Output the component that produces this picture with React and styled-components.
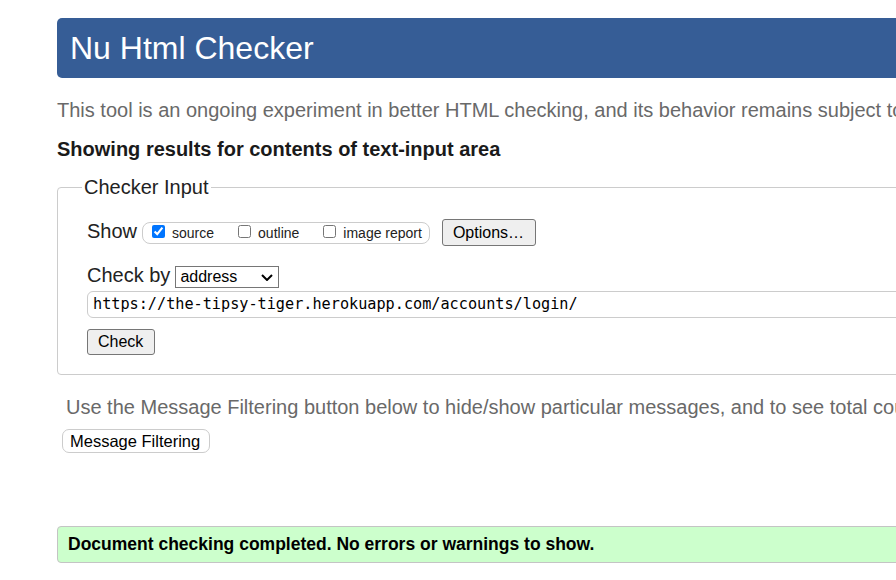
import React from "react";
import styled, { createGlobalStyle } from "styled-components";

const GlobalStyle = createGlobalStyle`
  html, body {
    margin: 0;
    padding: 0;
    background: #ffffff;
    overflow: hidden;
  }
  body {
    font-family: "Liberation Sans", Arial, sans-serif;
    color: #222;
  }
`;

const Page = styled.div`
  width: 1400px;
  padding: 18px 0 40px 57px;
  box-sizing: border-box;
`;

const Masthead = styled.h1`
  margin: 0;
  height: 60px;
  line-height: 60px;
  padding-left: 13px;
  background: #365d96;
  color: #ffffff;
  font-size: 32px;
  font-weight: normal;
  border-radius: 5px;
`;

const Lead = styled.p`
  margin: ${(p) => p.$mt || 0}px 0 0;
  padding-left: ${(p) => p.$indent || 0}px;
  font-size: 20px;
  line-height: 23px;
  color: #696969;
  white-space: nowrap;
`;

const ResultsTitle = styled.h2`
  margin: 16px 0 0;
  font-size: 20px;
  line-height: 23px;
  font-weight: bold;
  color: #1a1a1a;
`;

const InputFieldset = styled.fieldset`
  margin: 15px 0 0;
  padding: 20px 0 19px 29px;
  border: 1px solid #ccc;
  border-radius: 4px;
  min-width: 0;
`;

const Legend = styled.legend`
  margin-left: -5px;
  padding: 0 2px;
  font-size: 20px;
  line-height: 23px;
  color: #222;
`;

const Row = styled.div`
  display: flex;
  align-items: baseline;
  margin-top: ${(p) => p.$mt || 0}px;
`;

const RowLabel = styled.span`
  font-size: 20px;
  line-height: 23px;
  color: #222;
  margin-right: ${(p) => p.$gap || 5}px;
`;

const ShowGroup = styled.span`
  display: inline-flex;
  align-items: baseline;
  gap: 24px;
  padding: 2px 7px 2px 9px;
  border: 1px solid #ccc;
  border-radius: 8px;
  margin-right: 12px;
`;

const ShowOption = styled.label`
  display: inline-flex;
  align-items: flex-start;
  gap: 7px;
  font-size: 14px;
  line-height: 16px;
  color: #222;
`;

const Check = styled.input`
  margin: 0;
  width: 13px;
  height: 13px;
  display: block;
`;

const GreyButton = styled.button`
  font-family: "Liberation Sans", Arial, sans-serif;
  font-size: 16px;
  line-height: ${(p) => p.$lh || 18}px;
  padding: 3px 11px 3px 10px;
  background: #efefef;
  color: #000;
  border: 1px solid #767676;
  border-radius: 3px;
`;

const SelectWrap = styled.span`
  position: relative;
  display: inline-block;
`;

const Select = styled.select`
  appearance: none;
  -webkit-appearance: none;
  width: 104px;
  height: 22px;
  margin: 0;
  padding: 0 20px 0 4px;
  font-family: "Liberation Sans", Arial, sans-serif;
  font-size: 16px;
  color: #000;
  background: #fff;
  border: 1px solid #767676;
  border-radius: 0;
`;

const Chevron = styled.svg`
  position: absolute;
  right: 6px;
  top: 50%;
  margin-top: -3px;
  pointer-events: none;
`;

const UrlInput = styled.input`
  display: block;
  box-sizing: border-box;
  width: calc(100% - 20px);
  height: 27px;
  margin: 3px 0 0;
  padding: 0 5px;
  font-family: "DejaVu Sans Mono", "Liberation Mono", monospace;
  font-size: 15.2px;
  color: #000;
  background: #fff;
  border: 1px solid #ccc;
  border-radius: 6px;
`;

const CheckRow = styled.div`
  margin-top: 11px;
`;

const FilterButton = styled.button`
  display: block;
  margin: 10px 0 0 5px;
  padding: 2px 9px 2px 7px;
  font-family: "Liberation Sans", Arial, sans-serif;
  font-size: 16.5px;
  line-height: 18.5px;
  color: #000;
  background: #fff;
  border: 1px solid #ccc;
  border-radius: 7px;
`;

const SuccessBox = styled.div`
  margin-top: 73px;
  padding: 7px 10px 8px;
  background: #ccffcc;
  border: 1px solid #c4c4c4;
  border-radius: 4px;
  font-size: 17.5px;
  line-height: 20px;
  font-weight: bold;
  color: #000;
`;

export default function App() {
  return (
    <>
      <GlobalStyle />
      <Page>
        <Masthead>Nu Html Checker</Masthead>
        <Lead $mt={21}>
          This tool is an ongoing experiment in better HTML checking, and its
          behavior remains subject to change
        </Lead>
        <ResultsTitle>Showing results for contents of text-input area</ResultsTitle>
        <InputFieldset>
          <Legend>Checker Input</Legend>
          <Row>
            <RowLabel $gap={5}>Show</RowLabel>
            <ShowGroup>
              <ShowOption>
                <Check type="checkbox" defaultChecked />
                source
              </ShowOption>
              <ShowOption>
                <Check type="checkbox" />
                outline
              </ShowOption>
              <ShowOption>
                <Check type="checkbox" />
                image report
              </ShowOption>
            </ShowGroup>
            <GreyButton type="button" $lh={19}>Options…</GreyButton>
          </Row>
          <Row $mt={18}>
            <RowLabel $gap={5}>Check by</RowLabel>
            <SelectWrap>
              <Select defaultValue="address">
                <option value="address">address</option>
                <option value="file">file upload</option>
                <option value="text">text input</option>
              </Select>
              <Chevron width="12" height="7" viewBox="0 0 12 7">
                <polyline
                  points="1,1 6,6 11,1"
                  fill="none"
                  stroke="#000"
                  strokeWidth="2"
                />
              </Chevron>
            </SelectWrap>
          </Row>
          <UrlInput
            type="url"
            defaultValue="https://the-tipsy-tiger.herokuapp.com/accounts/login/"
          />
          <CheckRow>
            <GreyButton type="button">Check</GreyButton>
          </CheckRow>
        </InputFieldset>
        <Lead $mt={21} $indent={9}>
          Use the Message Filtering button below to hide/show particular
          messages, and to see total counts of errors and warnings.
        </Lead>
        <FilterButton type="button">Message Filtering</FilterButton>
        <SuccessBox>Document checking completed. No errors or warnings to show.</SuccessBox>
      </Page>
    </>
  );
}
